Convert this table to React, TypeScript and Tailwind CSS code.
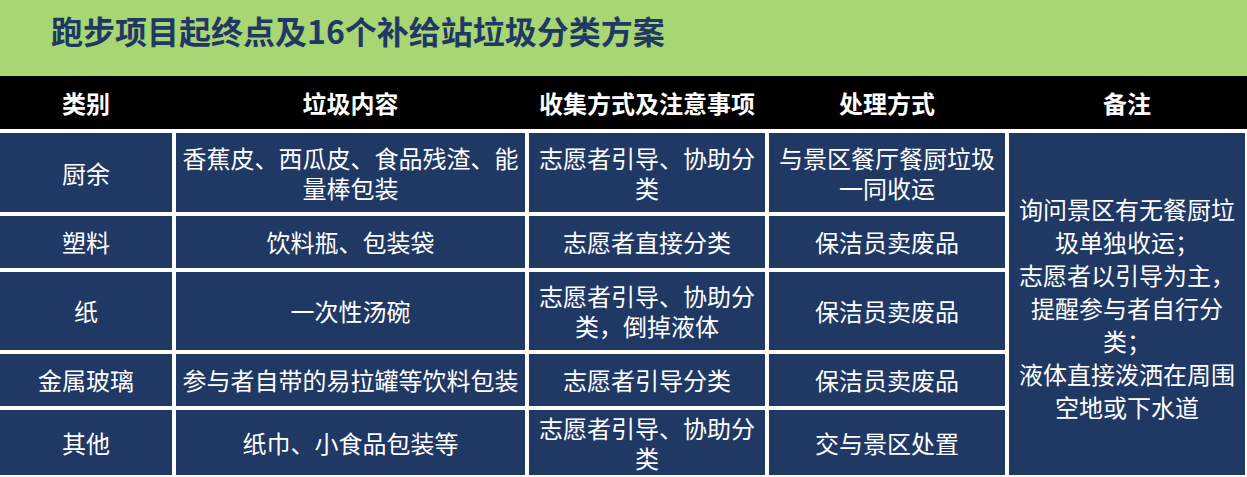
const font = { fontFamily: '"Noto Sans CJK SC", "Noto Sans", sans-serif' };

const columns = ["类别", "垃圾内容", "收集方式及注意事项", "处理方式", "备注"];

interface Row {
  kind: string;
  content: string;
  collect: string;
  handle: string;
}

const rows: Row[] = [
  { kind: "厨余", content: "香蕉皮、西瓜皮、食品残渣、能量棒包装", collect: "志愿者引导、协助分类", handle: "与景区餐厅餐厨垃圾一同收运" },
  { kind: "塑料", content: "饮料瓶、包装袋", collect: "志愿者直接分类", handle: "保洁员卖废品" },
  { kind: "纸", content: "一次性汤碗", collect: "志愿者引导、协助分类，倒掉液体", handle: "保洁员卖废品" },
  { kind: "金属玻璃", content: "参与者自带的易拉罐等饮料包装", collect: "志愿者引导分类", handle: "保洁员卖废品" },
  { kind: "其他", content: "纸巾、小食品包装等", collect: "志愿者引导、协助分类", handle: "交与景区处置" },
];

const remarks = [
  "询问景区有无餐厨垃",
  "圾单独收运；",
  "志愿者以引导为主，",
  "提醒参与者自行分",
  "类；",
  "液体直接泼洒在周围",
  "空地或下水道",
];

const rowStarts = ["row-start-1", "row-start-2", "row-start-3", "row-start-4", "row-start-5"];

function Cell({ text, row, col }: { text: string; row: number; col: string }) {
  return (
    <div
      className={`${rowStarts[row]} ${col} flex items-center justify-center bg-[#1f3864] px-[5px] text-center text-[24px] leading-[30px] text-white`}
    >
      {text}
    </div>
  );
}

export default function App() {
  return (
    <div className="h-[477px] w-[1247px] overflow-hidden bg-white" style={font}>
      <div className="flex h-[76px] items-start bg-[#a8d672] pl-[51px] pt-[9px]">
        <h1 className="text-[32px] font-bold leading-[42px] text-[#1f3864]">
          跑步项目起终点及16个补给站垃圾分类方案
        </h1>
      </div>

      <div className="grid h-[53px] grid-cols-[172px_349px_236px_236px_236px] gap-x-[4px] bg-black pr-[2px]">
        {columns.map((c) => (
          <div key={c} className="flex items-center justify-center text-[24px] font-bold text-white">
            {c}
          </div>
        ))}
      </div>

      <div className="grid grid-cols-[172px_349px_236px_236px_236px] grid-rows-[79px_52px_78px_52px_65px] gap-[4px] bg-white pb-[2px] pr-[2px] pt-[4px]">
        {rows.map((r, i) => (
          <div key={r.kind} className="contents">
            <Cell text={r.kind} row={i} col="col-start-1" />
            <Cell text={r.content} row={i} col="col-start-2" />
            <Cell text={r.collect} row={i} col="col-start-3" />
            <Cell text={r.handle} row={i} col="col-start-4" />
          </div>
        ))}
        <div className="col-start-5 row-span-5 row-start-1 flex flex-col items-center justify-center bg-[#1f3864] pt-[6px] text-center text-[24px] leading-[33px] text-white">
          {remarks.map((l) => (
            <div key={l}>{l}</div>
          ))}
        </div>
      </div>
    </div>
  );
}
